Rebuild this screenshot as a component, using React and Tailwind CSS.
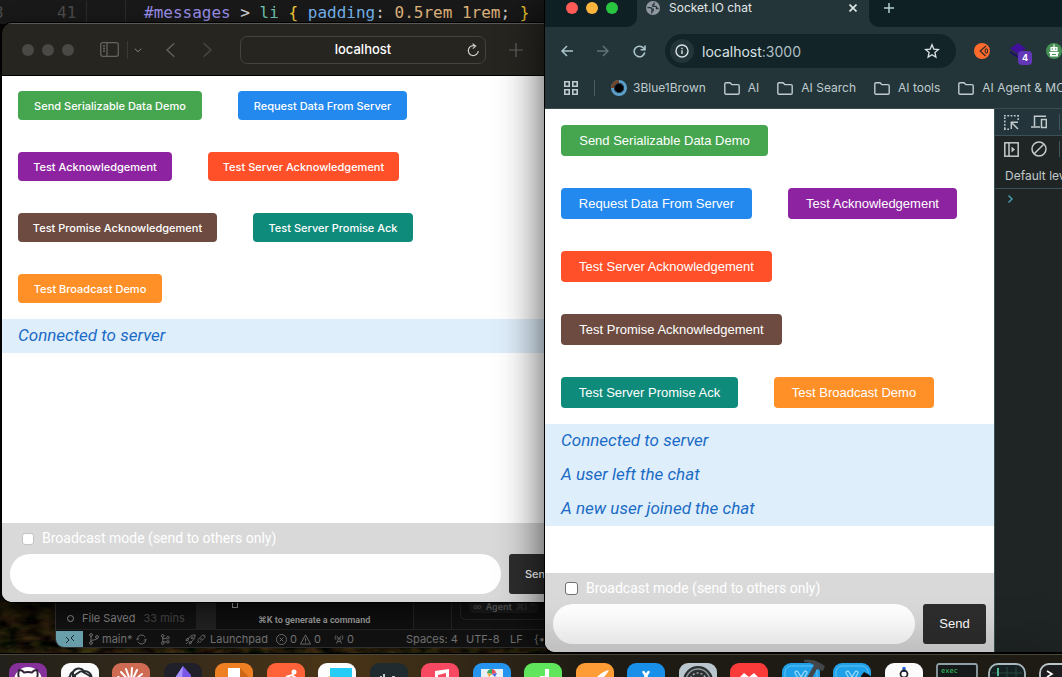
import React from 'react';

const sans = "font-['Inter','Open_Sans',sans-serif]";
const arial = "font-['Liberation_Sans','Arial',sans-serif]";
const roboto = "font-['Roboto','Inter',sans-serif]";

const demos = [
  { label: 'Send Serializable Data Demo', color: 'bg-[#46a54f]', small: 'w-[184px]', large: 'w-[207px]' },
  { label: 'Request Data From Server', color: 'bg-[#2389ef]', small: 'w-[169px]', large: 'w-[191px]' },
  { label: 'Test Acknowledgement', color: 'bg-[#8e23a1]', small: 'w-[154px]', large: 'w-[169px]' },
  { label: 'Test Server Acknowledgement', color: 'bg-[#ff502a]', small: 'w-[191px]', large: 'w-[211px]' },
  { label: 'Test Promise Acknowledgement', color: 'bg-[#6d4b40]', small: 'w-[199px]', large: 'w-[221px]' },
  { label: 'Test Server Promise Ack', color: 'bg-[#0f8b7c]', small: 'w-[160px]', large: 'w-[177px]' },
  { label: 'Test Broadcast Demo', color: 'bg-[#ff9027]', small: 'w-[144px]', large: 'w-[160px]' },
];

function ChatPage({ id, large, messages }) {
  const button = large
    ? `h-[31px] text-[13px] ${arial}`
    : `h-[29px] pt-px text-[11px] font-medium ${sans}`;
  return (
    <div className="flex min-h-0 min-w-0 flex-1 flex-col bg-white">
      <div className="flex flex-wrap gap-x-9 gap-y-8 p-4">
        {demos.map((d) => (
          <button
            key={d.label}
            type="button"
            className={`flex items-center justify-center whitespace-nowrap rounded-[4px] text-white ${button} ${d.color} ${large ? d.large : d.small}`}
          >
            {d.label}
          </button>
        ))}
      </div>
      <ul className={`flex-1 text-[17px] italic text-[#1a6bc6] ${roboto}`}>
        {messages.map((m) => (
          <li key={m} className="flex h-[34px] items-center bg-[#dfeefb] px-4">{m}</li>
        ))}
      </ul>
      <form className={`bg-[#d9d9d9] px-2 pb-2 ${sans}`} onSubmit={(e) => e.preventDefault()}>
        <div className={`flex h-[31px] items-center gap-2 px-3 text-[14px] text-white ${roboto}`}>
          <input
            id={`${id}-mode`}
            type="checkbox"
            className={`appearance-none rounded-[3px] border bg-white ${large ? 'size-[13px] border-[#707070]' : 'size-[12px] border-[#c4c4c4]'}`}
          />
          <label htmlFor={`${id}-mode`}>Broadcast mode (send to others only)</label>
        </div>
        <div className="flex gap-2">
          <input
            aria-label="Message"
            type="text"
            autoComplete="off"
            className="h-10 min-w-0 flex-1 rounded-full bg-white px-4 text-black outline-none"
          />
          <button
            type="submit"
            className={`h-10 rounded-[3px] bg-[#2d2d2d] px-4 text-white ${large ? `w-[63px] text-[13px] ${arial}` : 'w-[62px] text-left text-[11px] font-medium'}`}
          >
            Send
          </button>
        </div>
      </form>
    </div>
  );
}

function Icon({ size, box = '0 0 24 24', className = '', width = 2, children }) {
  return (
    <svg width={size} height={size} viewBox={box} fill="none" stroke="currentColor" strokeWidth={width} className={`shrink-0 ${className}`} aria-hidden="true">
      {children}
    </svg>
  );
}

function Wallpaper() {
  return (
    <svg className="absolute inset-0 size-full" preserveAspectRatio="none" viewBox="0 0 1062 677" aria-hidden="true">
      <defs>
        <filter id="leaf" x="0" y="0" width="100%" height="100%" colorInterpolationFilters="sRGB">
          <feTurbulence type="fractalNoise" baseFrequency="0.05 0.1" numOctaves="4" seed="8" />
          <feColorMatrix values="0.6 0 0 0 -0.14  0.4 0.15 0 0 -0.15  0.15 0 0 0 -0.03  0 0 0 0 1" />
        </filter>
        <linearGradient id="shade" x1="0" x2="0" y1="0" y2="1">
          <stop offset="0" stopColor="#000" stopOpacity=".7" />
          <stop offset="1" stopColor="#000" stopOpacity=".1" />
        </linearGradient>
      </defs>
      <rect width="1062" height="677" fill="#060606" />
      <rect y="595" width="1062" height="82" filter="url(#leaf)" />
      <rect y="595" width="1062" height="60" fill="url(#shade)" />
    </svg>
  );
}

function CodeStrip() {
  return (
    <div className="absolute inset-x-0 top-0 flex h-6 items-center overflow-hidden bg-[#191919] pt-px font-['DejaVu_Sans_Mono',monospace] text-[16px] text-[#d4d4d4]">
      <span className="w-[57px] -ml-[6px] text-[#4b4b4b]">3</span>
      <span className="w-[29px] ml-[6px] text-[#4b4b4b]">41</span>
      <span className="h-full w-[39px] border-l border-[#2b2b2b]" />
      <span className="h-full w-[19px] border-l border-[#2b2b2b]" />
      <code className="whitespace-pre font-['DejaVu_Sans_Mono',monospace]">
        <span className="text-[#9a8ee8]">#messages</span> &gt; <span className="text-[#6cc3ae]">li</span>{' '}
        <span className="text-[#f3cb32]">{'{'}</span> <span className="text-[#75b5f0]">padding</span>:{' '}
        <span className="text-[#e0b67e]">0.5rem 1rem</span>; <span className="text-[#f3cb32]">{'}'}</span>
      </code>
    </div>
  );
}

function Branch() {
  return (
    <Icon size={12} box="0 0 12 12" width={1}>
      <circle cx="3" cy="2" r="1.4" /><circle cx="3" cy="10" r="1.4" /><circle cx="9" cy="4" r="1.4" />
      <path d="M3 3.4v5.2M9 5.4c0 2-6 1-6 3" />
    </Icon>
  );
}

function Rocket() {
  return (
    <Icon size={11} box="0 0 12 12" width={1}>
      <path d="M4 8 3 7c1-4 4-6 8-6 0 4-2 7-6 8zM4 5H2L1 7h2M7 8v2l-2 1V9M1 11l2-2" /><circle cx="7.8" cy="4.2" r="1" />
    </Icon>
  );
}

function Plugs() {
  return (
    <Icon size={10} box="0 0 12 12" width={1}>
      <path d="M1 11l2-2M11 1 9 3M3 9c-1-1-1-2 0-3l1-1 3 3-1 1c-1 1-2 1-3 0zM5 4l2-2c1-1 2-1 3 0s1 2 0 3L8 7z" />
    </Icon>
  );
}

function EditorWindow() {
  return (
    <div className={`absolute bottom-[29px] left-[55px] top-[100px] flex w-[600px] flex-col justify-end overflow-hidden rounded-[9px] border border-[#343434] bg-[#131313] text-[11px] ${sans}`}>
      <div className="flex h-[28px] text-[#8d8d8d]">
        <div className="flex w-[140px] items-center gap-2 pl-[11px] pt-[6px]">
          <span className="size-[7px] rounded-full border border-[#999]" />
          <span className="whitespace-nowrap">File Saved</span>
          <span className="whitespace-nowrap text-[#4c4c4c]">33 mins</span>
        </div>
        <div className="w-[20px] bg-[#232323]" />
        <div className="flex w-[198px] gap-5 border-r border-[#262626] bg-[#101010] pl-4">
          <span className="h-[7px] w-[6px] border border-t-0 border-[#aaa]" />
          <span className={`whitespace-nowrap pt-[13px] text-[9px] font-semibold text-[#a5a5a5] ${roboto}`}>⌘K to generate a command</span>
        </div>
        <div className="w-[38px] border-r border-[#262626]" />
        <div className="ml-2 h-[19px] w-[150px] rounded-b-[6px] border border-t-0 border-[#262626] pl-2">
          <span className="flex h-[12px] w-[70px] items-center gap-1 rounded-b-[5px] bg-[#1f1f1f] pb-px pl-1 text-[9px] font-semibold text-[#777]">
            <span className="text-[#555]">∞</span>Agent<span className="text-[#444]">⌘I ⌃</span>
          </span>
        </div>
      </div>
      <div className="flex h-[18px] items-center border-t border-[#262626] pt-px text-[11px] text-[#7b7b7b]">
        <span className="flex h-full w-[27px] items-center justify-center bg-[#73aebb] text-[#1c2c30]">
          <Icon size={10} box="0 0 10 10" width={1}><path d="M1 3l3 3-3 3M9 1 6 4l3 3" /></Icon>
        </span>
        <span className="flex w-[53px] items-center gap-[2px] pl-[5px]"><Branch />main*</span>
        <span className="w-[24px]">
          <Icon size={11}><path d="M3 11a9 9 0 0 1 17-4M21 13a9 9 0 0 1-17 4M0 10l3 3 4-3M17 14l4-3 3 3" /></Icon>
        </span>
        <span className="w-[25px]">
          <Icon size={11} box="0 0 12 12" width={1}>
            <circle cx="3" cy="2" r="1.4" /><circle cx="3" cy="10" r="1.4" /><circle cx="8.6" cy="4" r="1.4" /><circle cx="8.6" cy="8.6" r="1.4" /><path d="M3 3.4v5.2M3 5h4M3 8.6h4" />
          </Icon>
        </span>
        <span className="flex w-[91px] items-center"><Rocket /><Plugs /><span className="pl-1">Launchpad</span></span>
        <span className="flex w-[24px] items-center gap-[3px]">
          <Icon size={11} width={2}><circle cx="12" cy="12" r="11" /><path d="m8 8 8 8M16 8l-8 8" /></Icon>0
        </span>
        <span className="flex w-[34px] items-center gap-[3px]">
          <Icon size={11} width={2}><path d="M12 2 23 22H1zM12 9v7M12 18v2" /></Icon>0
        </span>
        <span className="flex w-[72px] items-center gap-[3px]">
          <Icon size={10} width={2}><path d="m6 23 6-15 6 15M8 18h8M5 3c-3 3-3 8 0 11M19 3c3 3 3 8 0 11M9 5c-2 2-2 4 0 6M15 5c2 2 2 4 0 6" /></Icon>0
        </span>
        <span className="w-[60px] whitespace-nowrap">Spaces: 4</span>
        <span className="w-[44px]">UTF-8</span>
        <span className="w-[24px]">LF</span>
        <span>{'{•}'}</span>
      </div>
    </div>
  );
}

function SafariWindow() {
  return (
    <section className={`absolute bottom-[75px] left-[2px] top-[23px] isolate flex w-[577px] flex-col overflow-hidden rounded-[10px] shadow-[0_0_0_1px_#000,0_8px_24px_rgba(0,0,0,0.6)] ${sans}`}>
      <header className="z-10 flex h-[52px] shrink-0 items-center border-t border-[#5b5955] bg-[#272520] pl-5 text-[#65635f] shadow-[0_1px_0_#000]">
        <div className="flex w-[78px] gap-2">
          <span className="size-3 rounded-full bg-[#4b4945]" />
          <span className="size-3 rounded-full bg-[#4b4945]" />
          <span className="size-3 rounded-full bg-[#4b4945]" />
        </div>
        <button type="button" aria-label="Sidebar" className="w-[27px]">
          <svg width="19" height="15" viewBox="0 0 19 15" fill="none" stroke="currentColor" strokeWidth="1.3"><rect x=".7" y=".7" width="17.6" height="13.6" rx="2" /><path d="M7 1v13M3 4h2M3 6.500h2M3 9h2" /></svg>
        </button>
        <span className="h-[18px] w-[7px] border-l border-[#3b3935]" />
        <button type="button" aria-label="Tab groups" className="w-[29px] text-[#85837f]"><Icon size={8} width={3}><path d="m2 8 10 9L22 8" /></Icon></button>
        <button type="button" aria-label="Back" className="w-[36px]"><Icon size={16} width={2}><path d="M17 2 6 12l11 10" /></Icon></button>
        <button type="button" aria-label="Forward" className="w-[41px] text-[#4b4945]"><Icon size={16} width={2}><path d="m7 2 11 10L7 22" /></Icon></button>
        <div className="relative flex h-7 w-[246px] items-center justify-center rounded-[7px] border border-[#45433f] text-[13px] font-medium text-white">
          localhost
          <button type="button" aria-label="Reload" className="absolute right-[5px] text-[#d0d0ce]">
            <Icon size={14} box="0 0 14 14" width={1.2}><path d="M9.500 3.100A5 5 0 1 0 12.300 8M6.600.6l3 2.500-2.800 2.500" /></Icon>
          </button>
        </div>
        <button type="button" aria-label="New tab" className="pl-[23px]"><Icon size={14} box="0 0 14 14" width={1.200}><path d="M7 0v14M0 7h14" /></Icon></button>
      </header>
      <ChatPage id="safari" messages={['Connected to server']} />
    </section>
  );
}

const Folder = () => (
  <svg width="16" height="13" viewBox="0 0 16 13" fill="none" stroke="currentColor" strokeWidth="1.4" className="shrink-0" aria-hidden="true">
    <path d="M.8 11V2c0-.7.4-1.200 1.200-1.200h4L7.800 2.600H14c.8 0 1.200.4 1.200 1.200V11c0 .7-.4 1.200-1.200 1.200H2c-.8 0-1.200-.5-1.200-1.200z" />
  </svg>
);

const folders = ['AI', 'AI Search', 'AI tools', 'AI Agent & MCP'];

function ChromeWindow() {
  return (
    <section className={`absolute bottom-[25px] left-[545px] right-0 top-0 flex flex-col overflow-hidden rounded-bl-[10px] bg-[#243539] text-[12px] text-[#ccd6d8] shadow-[0_0_0_1px_#000,0_0_46px_rgba(0,0,0,0.75)] ${sans}`}>
      <div className="flex h-[27px] shrink-0">
        <div className="flex w-[92px] shrink-0 gap-2 rounded-br-[10px] bg-[#0f2024] pl-[21px] pt-[2px]">
          <span className="size-3 rounded-full bg-[#ff5b56]" />
          <span className="size-3 rounded-full bg-[#fdb43c]" />
          <span className="size-3 rounded-full bg-[#29c440]" />
        </div>
        <div className="flex h-4 w-[232px] shrink-0 items-center pl-[9px] text-[#e2e8e9]">
          <svg width="14" height="14" viewBox="0 0 14 14" aria-hidden="true"><circle cx="7" cy="7" r="7" fill="#9197a1" /><path d="M1.400 6.600h2.800c1.200 0 1.600.8 1.600 1.600h1.400v1.700H5.800v2.500M8.200 1.600v1.200c0 .8-.6 1-1.400 1v1.500h2.800c.5 0 .9.400.9.900v1.300h2" fill="none" stroke="#243539" strokeWidth="1.300" /></svg>
          <span className="flex-1 pl-[9px]">Socket.IO chat</span>
          <button type="button" aria-label="Close tab" className="pr-3"><Icon size={8} box="0 0 8 8" width={1.600}><path d="m.5.5 7 7M7.500.5l-7 7" /></Icon></button>
        </div>
        <div className="flex-1 rounded-bl-[10px] bg-[#0f2024] pl-[15px] pt-[3px] text-[#b3cdd2]">
          <button type="button" aria-label="New tab" className="block"><Icon size={10} box="0 0 10 10" width={1.500}><path d="M5 0v10M0 5h10" /></Icon></button>
        </div>
      </div>
      <div className="flex h-12 shrink-0 items-center pl-4 text-[#a9c5cb]">
        <button type="button" aria-label="Back" className="w-9"><Icon size={12} box="0 0 12 12" width={1.500}><path d="M12 6H1M6 1 1 6l5 5" /></Icon></button>
        <button type="button" aria-label="Forward" className="w-9 text-[#5e7277]"><Icon size={12} box="0 0 12 12" width={1.500}><path d="M0 6h11M6 1l5 5-5 5" /></Icon></button>
        <button type="button" aria-label="Reload" className="w-8"><Icon size={13} box="0 0 13 13" width={1.600}><path d="M11.700 7.500A5.300 5.300 0 1 1 10.500 3L12 4.500M12 .5v4.300H7.600" /></Icon></button>
        <div className="flex h-[34px] w-[291px] shrink-0 items-center rounded-full bg-[#122428] pl-[5px] pr-4 text-[14px] text-[#d9e2e4]">
          <span className="flex size-6 items-center justify-center rounded-full bg-[#243539]">
            <Icon size={14} box="0 0 14 14" width={1.400}><circle cx="7" cy="7" r="6" /><path d="M7 6.300V10M7 3.800v1.400" /></Icon>
          </span>
          <span className="flex-1 pl-2">localhost<span className="text-[#b0bec1]">:3000</span></span>
          <button type="button" aria-label="Bookmark"><Icon size={16} box="0 0 16 16" width={1.300}><path d="m8 1.800 1.800 4.300 4.600.4-3.500 3 1 4.600L8 11.700l-3.900 2.400 1-4.600-3.500-3 4.600-.4z" /></Icon></button>
        </div>
        <svg className="ml-[18px] shrink-0" width="16" height="16" viewBox="0 0 16 16" aria-hidden="true"><circle cx="8" cy="8" r="8" fill="#ff6b2c" /><path d="M12 3 6.200 8l5.300 5" fill="none" stroke="#3a2a24" strokeWidth="1.300" /><ellipse cx="12.400" cy="8" rx="1.300" ry="2.200" fill="none" stroke="#3a2a24" strokeWidth="1.100" /></svg>
        <div className="relative ml-5 h-4 w-4 shrink-0">
          <svg width="16" height="16" viewBox="0 0 16 16" aria-hidden="true"><path d="m0 8 8 5 8-5v2l-8 5-8-5z" fill="#1d0c6e" /><path d="m8 0 8 5.500-8 5.500-8-5.500z" fill="#40109c" /></svg>
          <span className="absolute -right-[6px] top-[8px] flex size-[14px] items-center justify-center rounded-[4px] bg-[#6338b8] text-[9px] font-bold text-white">4</span>
        </div>
        <svg className="ml-5 shrink-0" width="16" height="16" viewBox="0 0 16 16" aria-hidden="true"><circle cx="8" cy="8" r="8" fill="#468f55" /><path d="M7.400 1.500h1.200V4h3v4.200H4.400V4h3zM3 9h10v1.200h-1v3.300H4v-3.300H3z" fill="#fff" /><path d="M5.800 5.300h1v1.400h-1zM9.200 5.300h1v1.400h-1zM6 11h4v1H6z" fill="#468f55" /></svg>
      </div>
      <nav className="flex h-[34px] shrink-0 items-center overflow-hidden border-b border-[#3c4a4d] pb-2 pl-[19px] pt-px text-[#bfcbce]">
        <Icon size={14} box="0 0 14 14" width={1.600}><path d="M.8.8h4.400v4.400H.8zM8.800.8h4.400v4.400H8.800zM.8 8.800h4.400v4.400H.8zM8.800 8.800h4.400v4.400H8.800z" /></Icon>
        <span className="mx-4 h-4 w-px shrink-0 bg-[#465d62]" />
        <a href="#3b1b" className="flex items-center gap-[6px]">
          <svg width="16" height="16" viewBox="0 0 16 16" aria-hidden="true"><circle cx="8" cy="8" r="6.500" fill="#000" stroke="#5b9fc9" strokeWidth="3" /><path d="M1.500 8A6.500 6.500 0 0 1 8 1.500" fill="none" stroke="#754326" strokeWidth="3" /><circle cx="8" cy="8" r="4.500" fill="none" stroke="#20384a" strokeWidth="1" /></svg>
          3Blue1Brown
        </a>
        {folders.map((f) => (
          <a key={f} href="#folder" className="ml-[18px] flex shrink-0 items-center gap-2 whitespace-nowrap"><Folder />{f}</a>
        ))}
      </nav>
      <div className="flex min-h-0 flex-1">
        <ChatPage id="chrome" large messages={['Connected to server', 'A user left the chat', 'A new user joined the chat']} />
        <aside className="w-[68px] shrink-0 overflow-hidden border-l border-[#3a5257] bg-[#1f2424] text-[#c2cacb]">
          <div className="flex h-[27px] items-center gap-3 border-b border-[#3a5257] bg-[#23353a] pl-[9px]">
            <Icon size={15} box="0 0 15 15" width={1.500}><path d="M.8 14V0M14.200 5V0M0 .8h15M0 14.200h5" strokeDasharray="1.800 1.500" /><path d="M14 14 7.500 7.500M7.300 14V7.300H14" /></Icon>
            <Icon size={16} box="0 0 16 16" width={1.500}><path d="M15 2.200H3.500V12M0 13h9" /><rect x="10.500" y="5.500" width="4.800" height="8" /></Icon>
            <span className="h-4 w-px bg-[#3f5559]" />
          </div>
          <div className="flex h-[26px] items-center gap-3 pl-[9px]">
            <Icon size={15} box="0 0 15 15" width={1.500}><rect x=".8" y=".8" width="13.400" height="13.400" /><path d="M5 1v13" /><path d="m7.500 4.500 3.500 3-3.500 3z" fill="currentColor" stroke="none" /></Icon>
            <Icon size={16} box="0 0 16 16" width={1.500}><circle cx="8" cy="8" r="7" /><path d="m3.200 12.800 9.600-9.600" /></Icon>
            <span className="h-4 w-px bg-[#3f5559]" />
          </div>
          <div className="flex h-[27px] items-center whitespace-nowrap border-b border-[#3a5257] pl-[10px] pt-[2px]">Default levels</div>
          <div className="flex h-5 items-center pl-3 text-[#4aa3b5]"><Icon size={8} box="0 0 8 8" width={1.400}><path d="m1.500.5 3.500 3.500-3.500 3.500" /></Icon></div>
        </aside>
      </div>
    </section>
  );
}

const xcode = (
  <>
    <rect x="3" y="3" width="32" height="30" rx="6" fill="none" stroke="#5fc3f5" />
    <path d="m16 9 3 5 3-5c1.500-2 4 0 2.500 2L19 20l-5.500-9c-1.500-2 1-4 2.500-2z" stroke="#9bdcfa" strokeWidth="1.200" fill="none" />
  </>
);

const dockIcons = [
  { bg: '#85309b', art: <><circle cx="19" cy="18" r="14" fill="#fff" /><path d="M10 7c2 0 4 1 5 2.500 3-.6 5-.6 8 0C24 8 26 7 28 7c1 3 1 5 0 8v10H10V15c-1-3-1-5 0-8z" fill="none" stroke="#30233a" strokeWidth="2" /></> },
  { bg: '#fbfbfb', art: <g fill="none" stroke="#262b30" strokeWidth="2"><path d="M12 20c-4-3-4-9 0-11 2-4 8-5 11-1 5 0 9 4 7 9M14 18V12l6-4M12 9v9l8 5M20 8l9 5v6M8 14c-3 3-2 9 2 11" /></g> },
  { bg: '#cf6b52', art: <path d="M19 20 9 9M19 20 14 6M19 20 20 5M19 20 25 7M19 20 30 11M19 20 6 14" stroke="#fff" strokeWidth="2" strokeLinecap="round" /> },
  { bg: '#20202a', art: <><path d="M19 3 27 12v12H11v-9z" fill="#7956e8" /><path d="M19 3 11 15v9l7-8z" fill="#a893ff" /></> },
  { bg: '#ee7f22', art: <><path d="m25 5 13 13v8H14z" fill="#cd681b" /><path d="M13 5h12v16H13z" fill="#fff" /></> },
  { bg: '#ff6238', art: <><circle cx="27" cy="9" r="2.500" fill="#fff" /><path d="m27 9-2 4M19 14l6-2 4 3" fill="none" stroke="#fff" strokeWidth="2" /></> },
  { bg: '#fdfdfd', art: <><path d="M12 5h22v16H12z" fill="#24cdf5" /><path d="m8 15 4-2 6 8H6z" fill="#e5c046" /></> },
  { bg: '#1f2b2e', art: <path d="M11 13v2M14 11v4M22 14h3" stroke="#fff" strokeWidth="1.500" /> },
  { bg: '#f94861', art: <path d="M14 8v13h3V12l8-2v11h3V6z" fill="#fff" /> },
  { bg: '#2594ef', art: <><path d="M8 6h22v18H8z" fill="#e9f1f5" /><path d="M19 11V6a5 5 0 0 1 4 4z" fill="#e84c58" /><path d="m19 11-5-1a5 5 0 0 1 5-4z" fill="#38a768" /><path d="m19 11 5-1-2 4z" fill="#4a63dc" /><path d="m19 11-5-1 2 4z" fill="#f3a83a" /></> },
  { bg: '#5fe65c', art: <path d="M21 6h4v18h-4zM16 13h9v8h-9z" fill="#fff" /> },
  { bg: '#ff9c35', art: <path d="M33 7c-5 1-9 4-13 8l5 2c3-3 6-6 8-10z" fill="#fff" /> },
  { bg: '#188fe9', art: <path d="m16.500 9 2.500 4 2.500-4M19 13l-7 11M19 13l7 11" stroke="#fff" strokeWidth="2.500" fill="none" strokeLinecap="round" /> },
  { bg: '#b9c6cd', art: <><circle cx="19" cy="18" r="15" fill="#2b3032" /><circle cx="19" cy="18" r="12" fill="none" stroke="#8e979a" strokeWidth="1.500" /><circle cx="19" cy="18" r="8" fill="none" stroke="#a8b0b3" strokeWidth="1.500" strokeDasharray="2 2" /></> },
  { bg: '#fb3a3a', art: <path d="m9 15 5-5 5 4 5-4 5 5-5 6H14z" fill="#fff" /> },
  { bg: '#21a0ea', art: <>{xcode}<path d="M22-3c6-1 12 0 16 3l5 3-2 5-6-2L25 24l-4-2L32 2c-3-2-7-3-10-3z" fill="#43474a" /></> },
  { bg: '#21a0ea', art: <>{xcode}<path d="m28 13 3-4 4 2 6 5v12H26z" fill="#111" /></> },
  { bg: '#fbfbfb', art: <><path d="M17.500 4h3v5h-3z" fill="#1c62e8" /><circle cx="19" cy="11" r="3.500" fill="none" stroke="#222" strokeWidth="1.800" /><path d="m17 14-4 10M21 14l4 10" stroke="#222" strokeWidth="2" /></> },
  { bg: '#15191a', frame: '#8f9fa6', art: <text x="5" y="10" fontSize="7" fontFamily="DejaVu Sans Mono, monospace" fill="#3ecb62">exec</text> },
  { bg: '#142120', frame: '#a9b9c0', art: <><path d="M10 4v22M19 4v22M28 4v22M4 10h30M4 17h30" stroke="#294841" /><path d="M10 5v8" stroke="#63e0b0" strokeWidth="1.500" /></> },
  { bg: '#1d1d1f', frame: '#bcc6ca', art: <path d="m8 8 5 3-5 3" stroke="#fff" strokeWidth="1.600" fill="none" /> },
];

function Dock() {
  return (
    <div className="absolute inset-x-0 bottom-0 flex h-[23px] justify-between border-t border-[#4a463a] bg-linear-to-r from-[#22201a] via-[#4a3516] via-32% to-[#1e1b14] to-55% shadow-[0_-1px_0_#000,0_-10px_45px_rgba(0,0,0,0.28)]">
      <div className="-mr-[15px] flex min-w-0 flex-1 justify-between overflow-hidden pl-[9px] pt-[8px]">
        {dockIcons.map((d, i) => (
          <svg key={i} width="38" height="38" viewBox="0 0 38 38" className="shrink-0 overflow-visible" aria-hidden="true">
            <rect x={d.frame ? 1 : 0} y={d.frame ? 1 : 0} width={d.frame ? (i === 18 ? 40 : 36) : 38} height={d.frame ? 36 : 38} rx={i === 18 ? 2 : 9} fill={d.bg} stroke={d.frame || 'none'} strokeWidth="1.8" />
            {d.art}
          </svg>
        ))}
      </div>
    </div>
  );
}

export default function App() {
  return (
    <main className="relative h-screen w-full overflow-hidden bg-[#0c0b09]">
      <Wallpaper />
      <CodeStrip />
      <EditorWindow />
      <SafariWindow />
      <ChromeWindow />
      <Dock />
    </main>
  );
}
